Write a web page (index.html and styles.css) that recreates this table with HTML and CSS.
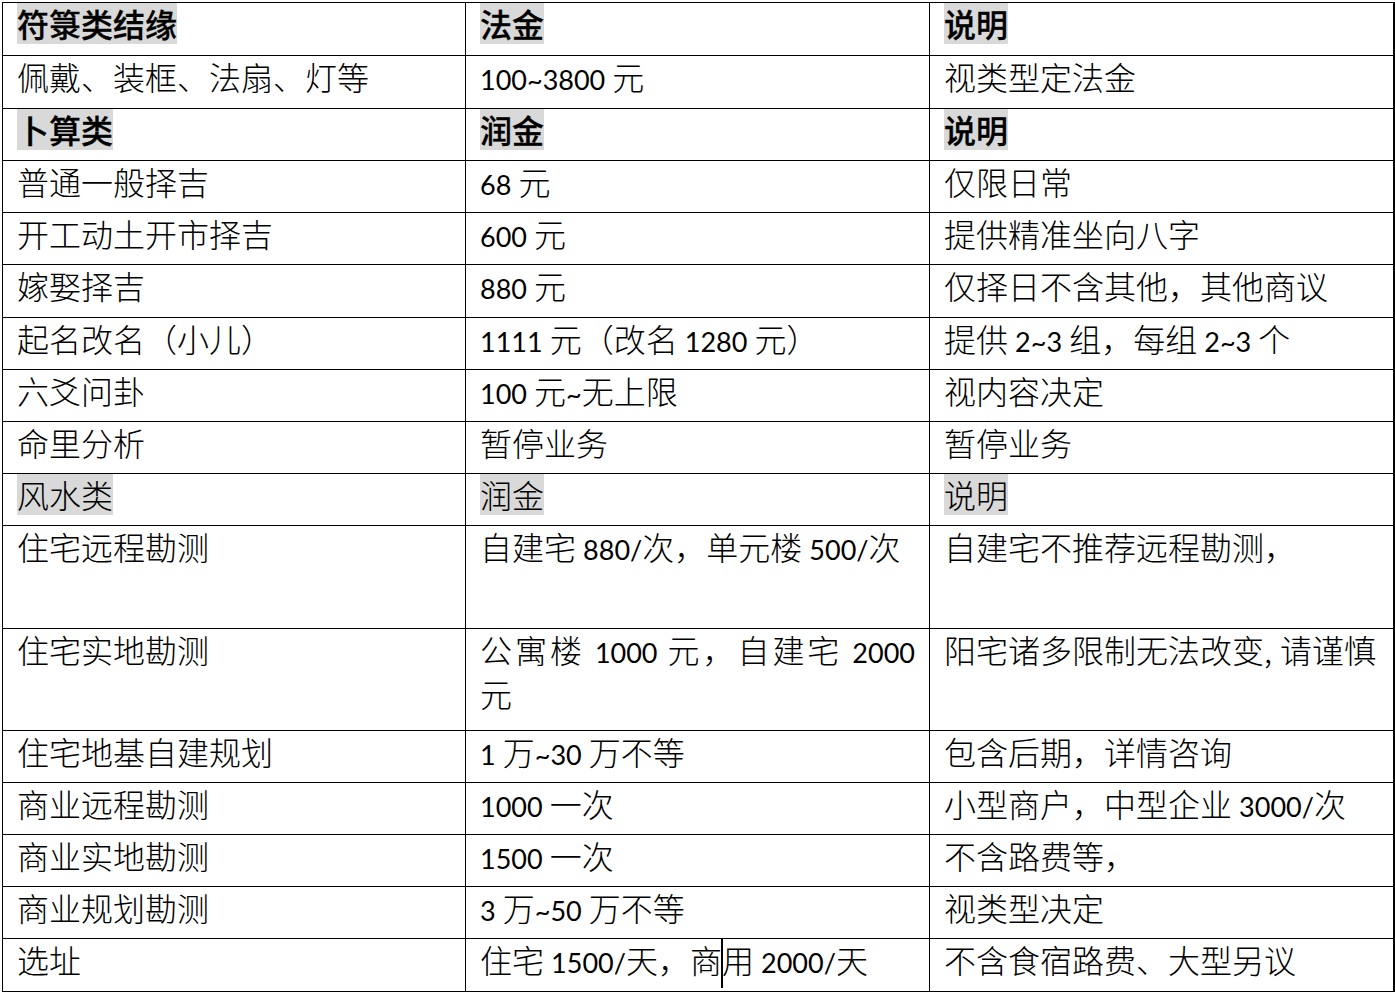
FILE: index.html
```html
<!DOCTYPE html>
<html lang="zh-CN">
<head>
<meta charset="utf-8">
<title>价目表</title>
<link rel="stylesheet" href="styles.css">
</head>
<body>
<table class="sheet">
  <colgroup><col class="c1"><col class="c2"><col class="c3"></colgroup>
  <tbody>
    <tr class="h53 bold">
      <td><span class="hl">符箓类结缘</span></td>
      <td><span class="hl">法金</span></td>
      <td><span class="hl">说明</span></td>
    </tr>
    <tr class="h53">
      <td>佩戴、装框、法扇、灯等</td>
      <td><span class="n">100~3800</span> 元</td>
      <td>视类型定法金</td>
    </tr>
    <tr class="h52 bold">
      <td><span class="hl">卜算类</span></td>
      <td><span class="hl">润金</span></td>
      <td><span class="hl">说明</span></td>
    </tr>
    <tr class="h52">
      <td>普通一般择吉</td>
      <td><span class="n">68</span> 元</td>
      <td>仅限日常</td>
    </tr>
    <tr class="h52">
      <td>开工动土开市择吉</td>
      <td><span class="n">600</span> 元</td>
      <td>提供精准坐向八字</td>
    </tr>
    <tr class="h53">
      <td>嫁娶择吉</td>
      <td><span class="n">880</span> 元</td>
      <td>仅择日不含其他，其他商议</td>
    </tr>
    <tr class="h52">
      <td>起名改名（小儿）</td>
      <td><span class="n">1111</span> 元（改名 <span class="n">1280</span> 元）</td>
      <td>提供 <span class="n">2~3</span> 组，每组 <span class="n">2~3</span> 个</td>
    </tr>
    <tr class="h52">
      <td>六爻问卦</td>
      <td><span class="n">100</span> 元<span class="n">~</span>无上限</td>
      <td>视内容决定</td>
    </tr>
    <tr class="h52">
      <td>命里分析</td>
      <td>暂停业务</td>
      <td>暂停业务</td>
    </tr>
    <tr class="h52">
      <td><span class="hl">风水类</span></td>
      <td><span class="hl">润金</span></td>
      <td><span class="hl">说明</span></td>
    </tr>
    <tr class="h103">
      <td>住宅远程勘测</td>
      <td>自建宅 <span class="n">880/</span>次，单元楼 <span class="n">500/</span>次</td>
      <td>自建宅不推荐远程勘测，</td>
    </tr>
    <tr class="h102">
      <td>住宅实地勘测</td>
      <td class="just">公寓楼 <span class="n">1000</span> 元，自建宅 <span class="n">2000</span> 元</td>
      <td class="nowrap">阳宅诸多限制无法改变<span class="hc">,</span>请谨慎</td>
    </tr>
    <tr class="h52">
      <td>住宅地基自建规划</td>
      <td><span class="n">1</span> 万<span class="n">~30</span> 万不等</td>
      <td>包含后期，详情咨询</td>
    </tr>
    <tr class="h52">
      <td>商业远程勘测</td>
      <td><span class="n">1000</span> 一次</td>
      <td>小型商户，中型企业 <span class="n">3000/</span>次</td>
    </tr>
    <tr class="h52">
      <td>商业实地勘测</td>
      <td><span class="n">1500</span> 一次</td>
      <td>不含路费等，</td>
    </tr>
    <tr class="h52">
      <td>商业规划勘测</td>
      <td><span class="n">3</span> 万<span class="n">~50</span> 万不等</td>
      <td>视类型决定</td>
    </tr>
    <tr class="h53">
      <td>选址</td>
      <td>住宅 <span class="n">1500/</span>天，商<span class="caret"></span>用 <span class="n">2000/</span>天</td>
      <td>不含食宿路费、大型另议</td>
    </tr>
  </tbody>
</table>
</body>
</html>
```
FILE: styles.css
```css
html, body {
  margin: 0;
  padding: 0;
  background: #ffffff;
}

body {
  padding: 2px 0 0 2px;
  font-family: "Noto Sans CJK SC", "Noto Sans", sans-serif;
  color: #000000;
}

.sheet {
  border-collapse: collapse;
  table-layout: fixed;
  width: 1391px;
  font-size: 32px;
  line-height: 41px;
  font-weight: 300;
}

.c1 { width: 463px; }
.c2 { width: 464px; }
.c3 { width: 464px; }

.sheet td {
  border: 1px solid #000000;
  padding: 0 14px 0 14px;
  vertical-align: top;
  text-align: left;
  overflow: visible;
}

.sheet td:last-child {
  border-right-width: 2px;
}

.h52 { height: 52px; }
.h53 { height: 53px; }
.h103 { height: 103px; }
.h102 { height: 102px; }

.bold td {
  font-weight: 500;
  -webkit-text-stroke: 0.3px #000000;
}

.hl {
  display: inline-block;
  background: #d9d9d9;
  line-height: 41px;
  height: 41px;
  vertical-align: top;
}

.n {
  font-family: Lato, "Liberation Sans", sans-serif;
  font-size: 27px;
  font-weight: 400;
}

.sheet td.just {
  text-align: justify;
  text-justify: inter-character;
}

.sheet td.nowrap {
  white-space: nowrap;
}

.hc {
  display: inline-block;
  width: 16px;
}

.caret {
  display: inline-block;
  width: 0;
  height: 49px;
  border-left: 2px solid #000000;
  margin: 0 -1px;
  vertical-align: top;
}
```
